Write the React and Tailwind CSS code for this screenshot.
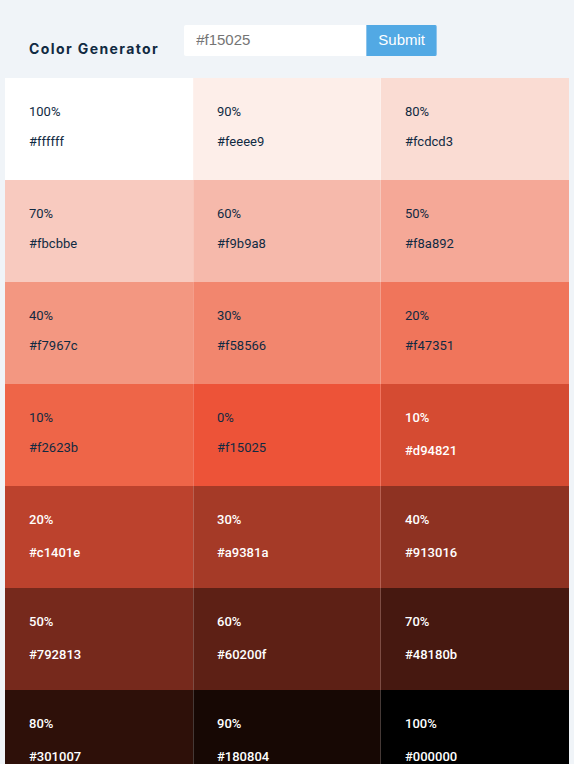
const swatches = [
  { percent: '100%', hex: '#ffffff', fill: 'bg-[#ffffff]' },
  { percent: '90%', hex: '#feeee9', fill: 'bg-[#fdeee9]' },
  { percent: '80%', hex: '#fcdcd3', fill: 'bg-[#fadcd3]' },
  { percent: '70%', hex: '#fbcbbe', fill: 'bg-[#f8cabf]' },
  { percent: '60%', hex: '#f9b9a8', fill: 'bg-[#f6b9ab]' },
  { percent: '50%', hex: '#f8a892', fill: 'bg-[#f5a897]' },
  { percent: '40%', hex: '#f7967c', fill: 'bg-[#f39781]' },
  { percent: '30%', hex: '#f58566', fill: 'bg-[#f2866e]' },
  { percent: '20%', hex: '#f47351', fill: 'bg-[#f0755b]' },
  { percent: '10%', hex: '#f2623b', fill: 'bg-[#ee6548]' },
  { percent: '0%', hex: '#f15025', fill: 'bg-[#ed5338]' },
  { percent: '10%', hex: '#d94821', fill: 'bg-[#d54b32]', dark: true },
  { percent: '20%', hex: '#c1401e', fill: 'bg-[#bc422d]', dark: true },
  { percent: '30%', hex: '#a9381a', fill: 'bg-[#a53a27]', dark: true },
  { percent: '40%', hex: '#913016', fill: 'bg-[#8e3222]', dark: true },
  { percent: '50%', hex: '#792813', fill: 'bg-[#76291c]', dark: true },
  { percent: '60%', hex: '#60200f', fill: 'bg-[#5d2015]', dark: true },
  { percent: '70%', hex: '#48180b', fill: 'bg-[#461810]', dark: true },
  { percent: '80%', hex: '#301007', fill: 'bg-[#2e1009]', dark: true },
  { percent: '90%', hex: '#180804', fill: 'bg-[#170804]', dark: true },
  { percent: '100%', hex: '#000000', fill: 'bg-[#000000]', dark: true },
];

function Swatch({ percent, hex, fill, dark }) {
  return (
    <article
      className={`h-[102px] border-white/20 px-6 pt-6 text-[13px] leading-5 nth-[3n+2]:border-x nth-[3n+2]:px-[23px] ${fill} ${
        dark ? 'font-medium text-white' : 'text-[#102a42]'
      }`}
    >
      <p>{percent}</p>
      <p className={dark ? 'mt-[13px]' : 'mt-[10px]'}>{hex}</p>
    </article>
  );
}

export default function App() {
  return (
    <main className="min-h-screen bg-[#f0f4f8] px-[5px] font-['Roboto',sans-serif]">
      <section className="flex h-[78px] items-center gap-[25px] pt-[3px] pl-6">
        <h1 className="pt-4 font-['Inter',sans-serif] text-sm leading-5 font-bold tracking-[0.1em] whitespace-nowrap text-[#102a42]">
          Color Generator
        </h1>
        <form
          className="flex h-[31px] font-['Liberation_Sans',sans-serif] text-[15px]"
          onSubmit={(e) => e.preventDefault()}
        >
          <input
            type="text"
            aria-label="Color"
            placeholder="#f15025"
            className="w-[182px] rounded-l-xs bg-white px-3 outline-none placeholder:text-[#757575]"
          />
          <button
            type="submit"
            className="w-[71px] rounded-r-xs border border-[#8dc4ec] border-y-[#52a9e4] bg-[#52a9e4] text-center text-white"
          >
            Submit
          </button>
        </form>
      </section>
      <section className="grid grid-cols-3">
        {swatches.map((s) => (
          <Swatch key={s.hex} {...s} />
        ))}
      </section>
    </main>
  );
}
